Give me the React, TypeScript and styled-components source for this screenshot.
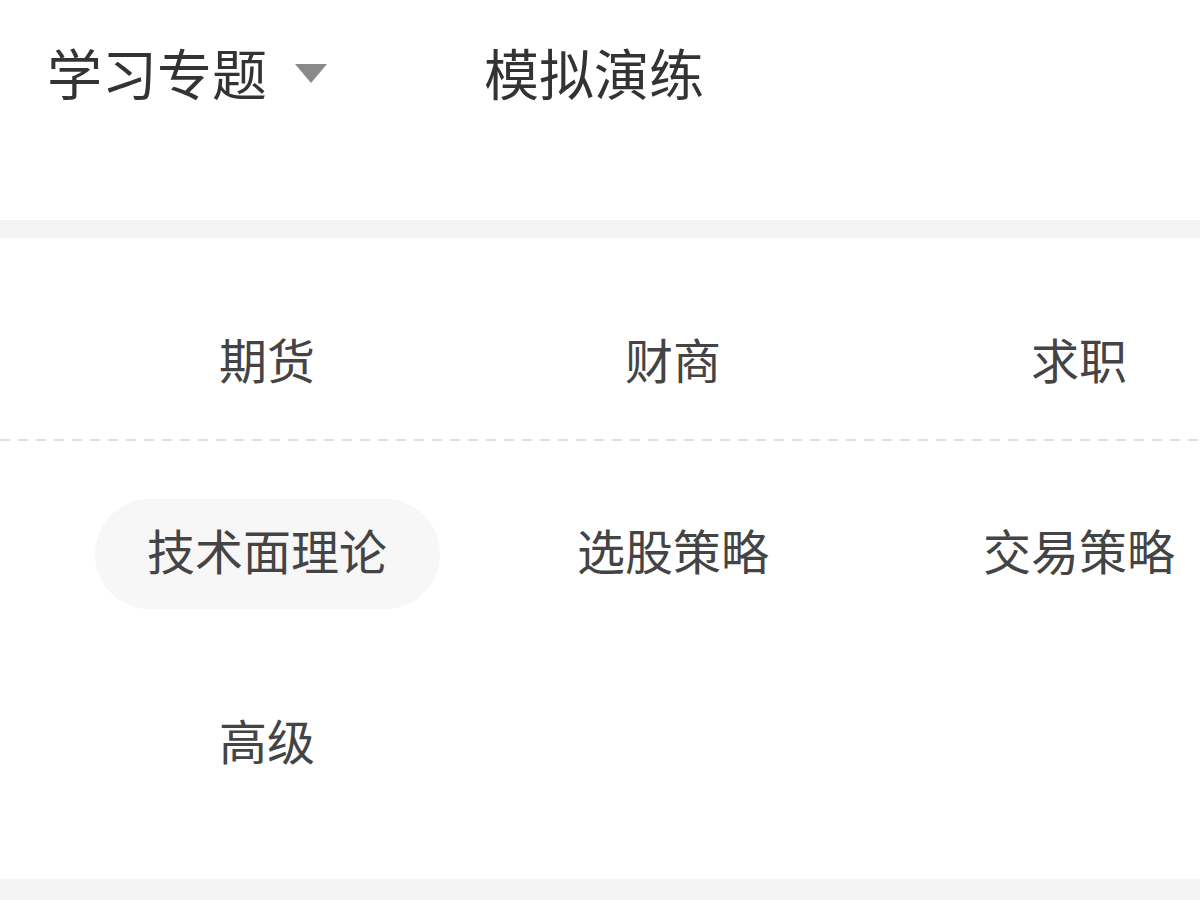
import styled, { createGlobalStyle } from 'styled-components'

const GlobalStyle = createGlobalStyle`
  html, body {
    margin: 0;
    padding: 0;
    background: #fff;
  }
  body {
    font-family: "Noto Sans CJK SC", "Noto Sans", sans-serif;
    overflow: hidden;
  }
`

type Topic = { id: string; label: string }

const categories: Topic[] = [
  { id: 'futures', label: '期货' },
  { id: 'wealth', label: '财商' },
  { id: 'career', label: '求职' },
]

const topics: Topic[] = [
  { id: 'ta', label: '技术面理论' },
  { id: 'picking', label: '选股策略' },
  { id: 'trading', label: '交易策略' },
  { id: 'advanced', label: '高级' },
]

export default function App() {
  const activeTopic = 'ta'

  return (
    <>
      <GlobalStyle />
      <Page>
        <Header>
          <Tab>
            学习专题
            <Caret />
          </Tab>
          <Tab>模拟演练</Tab>
        </Header>
        <Band />
        <Panel>
          <CategoryGrid>
            {categories.map((c) => (
              <Cell key={c.id}>
                <Item>{c.label}</Item>
              </Cell>
            ))}
          </CategoryGrid>
          <Divider />
          <TopicGrid>
            {topics.map((t) => (
              <Cell key={t.id}>
                <Item $active={t.id === activeTopic}>{t.label}</Item>
              </Cell>
            ))}
          </TopicGrid>
        </Panel>
        <Band $grow />
      </Page>
    </>
  )
}

const Page = styled.div`
  display: flex;
  flex-direction: column;
  width: 1200px;
  height: 900px;
  overflow: hidden;
`

const Header = styled.div`
  display: flex;
  align-items: flex-start;
  gap: 157px;
  height: 220px;
  padding: 43px 0 0 47px;
  box-sizing: border-box;
`

const Tab = styled.div`
  display: flex;
  align-items: center;
  gap: 28px;
  height: 56px;
  font-size: 55px;
  line-height: 56px;
  color: #333;
`

const Caret = styled.span`
  display: block;
  width: 0;
  height: 0;
  border-left: 16px solid transparent;
  border-right: 16px solid transparent;
  border-top: 19px solid #8a8a8a;
  margin-top: 4px;
`

const Band = styled.div<{ $grow?: boolean }>`
  background: #f3f3f3;
  height: 18px;
  flex: ${({ $grow }) => ($grow ? 1 : 'none')};
`

const Panel = styled.div`
  background: #fff;
`

const grid = `
  display: grid;
  grid-template-columns: repeat(3, 406px);
  padding-left: 64px;
`

const CategoryGrid = styled.div`
  ${grid}
  padding-top: 65px;
  padding-bottom: 26px;
`

const TopicGrid = styled.div`
  ${grid}
  row-gap: 80px;
  padding-top: 53px;
  padding-bottom: 85px;
`

const Divider = styled.div`
  height: 2px;
  background-image: linear-gradient(to right, #e0e0e0 0 10px, transparent 10px 18px);
  background-size: 18px 2px;
  background-repeat: repeat-x;
`

const Cell = styled.div`
  display: flex;
  justify-content: center;
`

const Item = styled.div<{ $active?: boolean }>`
  display: flex;
  align-items: center;
  justify-content: center;
  box-sizing: border-box;
  width: 345px;
  height: ${({ $active }) => ($active ? '110px' : '96px')};
  margin: ${({ $active }) => ($active ? '5px 0 -5px' : '7px 0')};
  padding-bottom: ${({ $active }) => ($active ? '10px' : '0')};
  border-radius: 55px;
  background: ${({ $active }) => ($active ? '#f7f7f7' : 'transparent')};
  font-size: 48px;
  color: #444;
`
